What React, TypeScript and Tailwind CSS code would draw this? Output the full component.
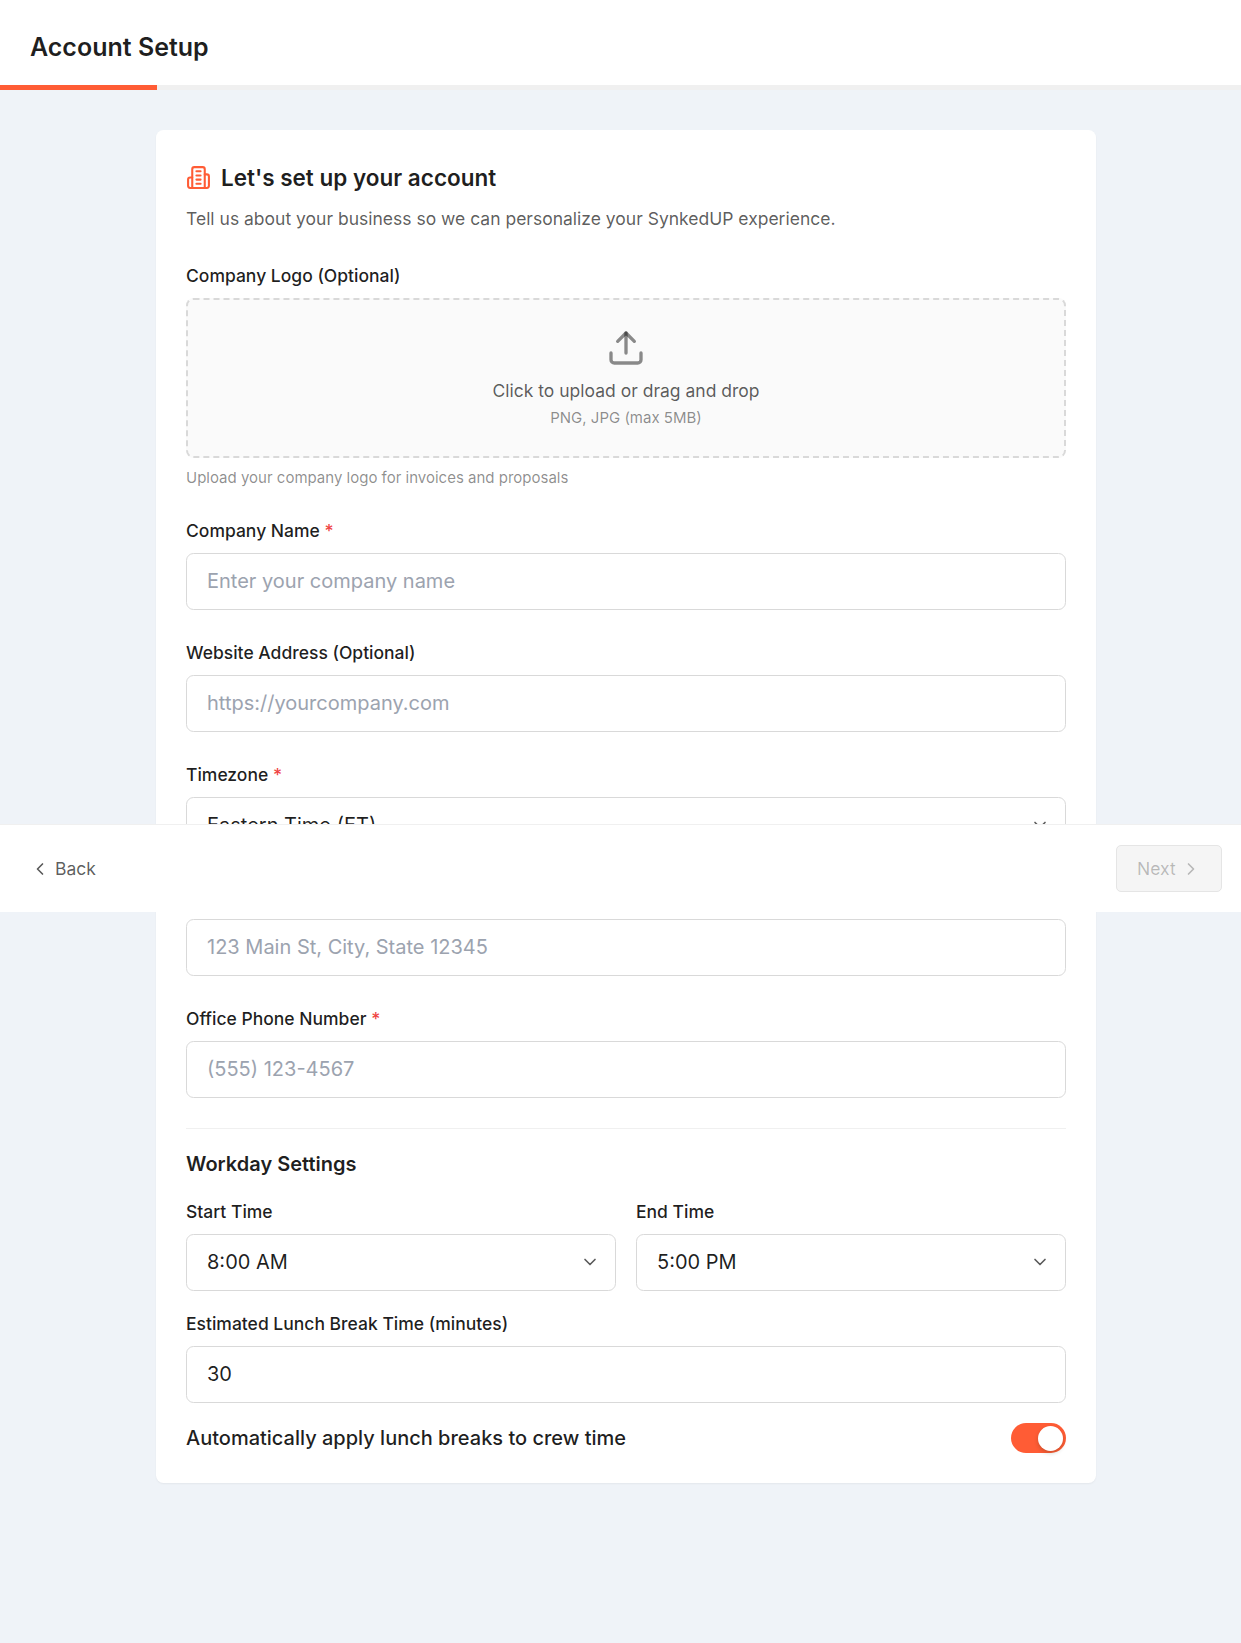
import type { ReactNode } from "react";

type IconProps = { size: number; paths: string[]; className?: string };

function Icon({ size, paths, className }: IconProps) {
  return (
    <svg
      width={size}
      height={size}
      viewBox="0 0 24 24"
      fill="none"
      stroke="currentColor"
      strokeWidth="2"
      strokeLinecap="round"
      strokeLinejoin="round"
      className={className}
    >
      {paths.map((d) => (
        <path key={d} d={d} />
      ))}
    </svg>
  );
}

const building = [
  "M6 22V4a2 2 0 0 1 2-2h8a2 2 0 0 1 2 2v18Z",
  "M6 12H4a2 2 0 0 0-2 2v6a2 2 0 0 0 2 2h2",
  "M18 9h2a2 2 0 0 1 2 2v9a2 2 0 0 1-2 2h-2",
  "M10 6h4",
  "M10 10h4",
  "M10 14h4",
  "M10 18h4",
];
const upload = [
  "M21 15v4a2 2 0 0 1-2 2H5a2 2 0 0 1-2-2v-4",
  "M17 8 12 3 7 8",
  "M12 3v12",
];

const boxClass =
  "flex h-[57px] w-full items-center rounded-[7.5px] border border-[#d9d9d9] bg-white px-5 pb-0.5 text-[20px] leading-[30px]";

function Field({ label, required, children }: { label: string; required?: boolean; children: ReactNode }) {
  return (
    <div className="flex flex-col gap-2.5">
      <label className="text-[17.5px] leading-[25px] font-medium">
        {label}
        {required && <span className="text-[#ef4444]"> *</span>}
      </label>
      {children}
    </div>
  );
}

function Input({ placeholder, value }: { placeholder?: string; value?: string }) {
  return (
    <input
      className={`${boxClass} outline-none placeholder:text-[#9ca3af]`}
      placeholder={placeholder}
      defaultValue={value}
    />
  );
}

function Select({ value }: { value: string }) {
  return (
    <button type="button" className={`${boxClass} justify-between`}>
      <span>{value}</span>
      <Icon size={20} paths={["m6 9 6 6 6-6"]} className="-mr-[5px] text-black/65" />
    </button>
  );
}

export default function App() {
  return (
    <div className="relative min-h-[1643px] bg-[#eff3f8] font-['Inter',sans-serif] text-black/88">
      <header className="flex h-[85px] items-center bg-white px-[30px]">
        <h1 className="mt-2.5 text-[25px] leading-[35px] font-semibold">Account Setup</h1>
      </header>
      <div className="h-[5px] bg-[#f0f0f0]">
        <div className="h-full w-[157px] bg-[#ff5c35]" />
      </div>

      <main className="mt-10 ml-[156px] flex w-[940px] flex-col rounded-[7.5px] bg-white p-[30px] shadow-[0_1px_2px_rgba(0,0,0,0.05)]">
        <div className="flex h-[35px] items-center gap-2.5">
          <Icon size={25} paths={building} className="text-[#ff5c35]" />
          <h2 className="text-[22.5px] leading-[35px] font-semibold">Let's set up your account</h2>
        </div>
        <p className="mt-[11px] text-[17.5px] leading-[25px] text-black/65">
          Tell us about your business so we can personalize your SynkedUP experience.
        </p>

        <form className="mt-8 flex flex-col gap-[30px]">
          <Field label="Company Logo (Optional)">
            <div className="flex h-40 flex-col items-center rounded-[7.5px] border-2 border-dashed border-[#d9d9d9] bg-[#fafafa] p-7">
              <Icon size={40} paths={upload} className="shrink-0 text-black/45" />
              <p className="mt-2.5 text-[17.5px] leading-[25px] text-black/65">Click to upload or drag and drop</p>
              <p className="mt-[5px] text-[15px] leading-5 text-black/45">PNG, JPG (max 5MB)</p>
            </div>
            <p className="text-[15px] leading-5 text-black/45">Upload your company logo for invoices and proposals</p>
          </Field>
          <Field label="Company Name" required>
            <Input placeholder="Enter your company name" />
          </Field>
          <Field label="Website Address (Optional)">
            <Input placeholder="https://yourcompany.com" />
          </Field>
          <Field label="Timezone" required>
            <Select value="Eastern Time (ET)" />
          </Field>
          <Field label="Office Address" required>
            <Input placeholder="123 Main St, City, State 12345" />
          </Field>
          <Field label="Office Phone Number" required>
            <Input placeholder="(555) 123-4567" />
          </Field>

          <section className="flex flex-col gap-5 border-t border-[#f0f0f0] pt-5">
            <h3 className="text-[20px] leading-[30px] font-semibold">Workday Settings</h3>
            <div className="grid grid-cols-2 gap-5">
              <Field label="Start Time">
                <Select value="8:00 AM" />
              </Field>
              <Field label="End Time">
                <Select value="5:00 PM" />
              </Field>
            </div>
            <Field label="Estimated Lunch Break Time (minutes)">
              <Input value="30" />
            </Field>
            <div className="flex h-[30px] items-center justify-between">
              <span className="text-[20px] leading-[30px] font-medium">Automatically apply lunch breaks to crew time</span>
              <button
                type="button"
                role="switch"
                aria-checked="true"
                className="flex h-[30px] w-[55px] items-center justify-end rounded-full bg-[#ff5c35] pr-[3px]"
              >
                <span className="h-[25px] w-[25px] rounded-full bg-white shadow-[0_2px_4px_rgba(0,35,11,0.2)]" />
              </button>
            </div>
          </section>
        </form>
      </main>

      <footer className="absolute inset-x-0 top-[824px] flex h-[88px] items-center justify-between border-t border-[#f0f0f0] bg-white pr-[19px] pl-[30px]">
        <button type="button" className="flex items-center gap-[5px] text-[17.5px] leading-[25px] text-black/65">
          <Icon size={20} paths={["m15 18-6-6 6-6"]} />
          Back
        </button>
        <button
          type="button"
          disabled
          className="flex h-[47px] w-[106px] items-center gap-[5px] rounded-[5px] border border-[#e5e5e5] bg-[#f5f5f5] pl-5 text-[17.5px] leading-[25px] text-black/25"
        >
          Next
          <Icon size={20} paths={["m9 18 6-6-6-6"]} />
        </button>
      </footer>
    </div>
  );
}
